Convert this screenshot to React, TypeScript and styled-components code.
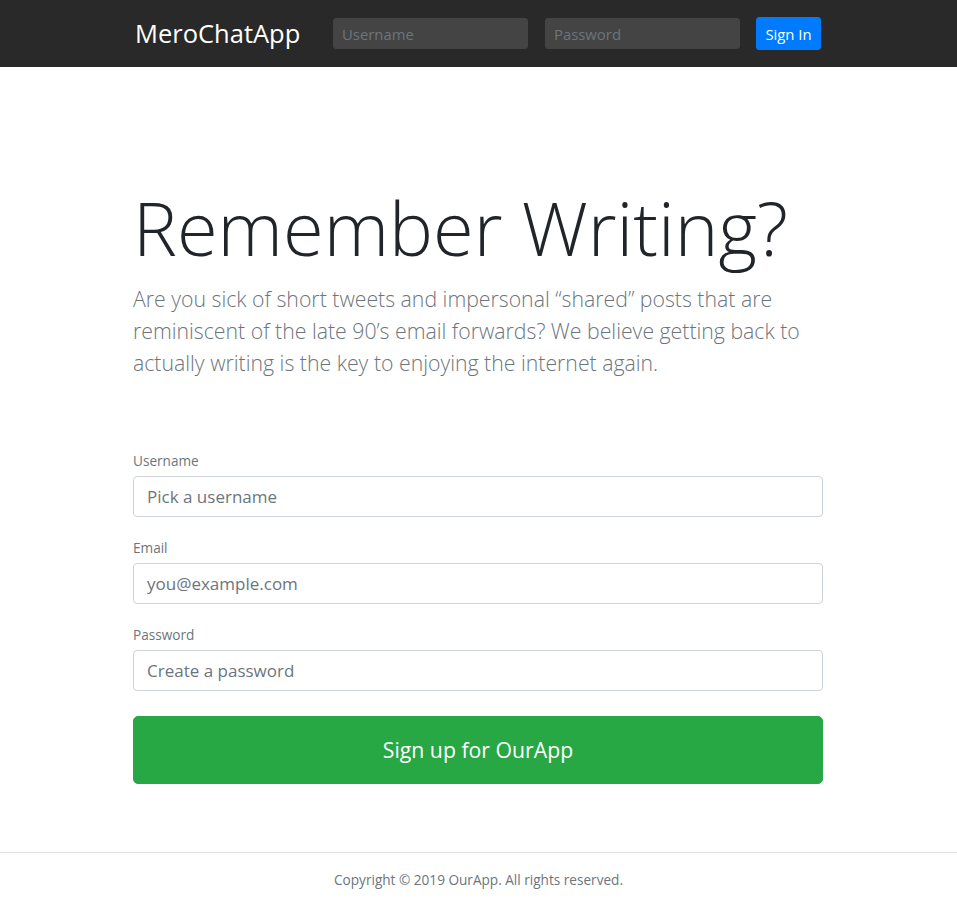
import React from "react";
import styled, { createGlobalStyle } from "styled-components";

const GlobalStyle = createGlobalStyle`
  html, body { margin: 0; padding: 0; background: #fff; }
  body {
    font-family: "Open Sans", "Liberation Sans", sans-serif;
    font-size: 17px;
    line-height: 1.5;
    color: #212529;
  }
  * { box-sizing: border-box; }
`;

const HeaderBar = styled.header`
  background: #292929;
  padding: 17px 0;
`;

const HeaderInner = styled.div`
  width: 686px;
  margin-left: calc(50% - 343.5px);
  display: flex;
  align-items: center;
  height: 33px;
`;

const Brand = styled.h4`
  margin: 0 auto 0 0;
  font-size: 25.5px;
  font-weight: 400;
  line-height: 1.2;
  color: #fff;
`;

const HeaderForm = styled.form`
  display: flex;
  align-items: center;
  gap: 17px;
`;

const HeaderInput = styled.input`
  width: 195px;
  height: 31px;
  padding: 4px 8px;
  font-family: inherit;
  font-size: 14.875px;
  color: #fff;
  background: #444;
  border: 1px solid #444;
  border-radius: 3px;
  outline: none;
  &::placeholder { color: #6c757d; }
`;

const SmallButton = styled.button`
  width: 65px;
  height: 33px;
  padding: 0;
  margin-left: -1px;
  font-family: inherit;
  font-size: 14.875px;
  color: #fff;
  background: #007bff;
  border: 1px solid #007bff;
  border-radius: 3px;
`;

const Main = styled.main`
  width: 690px;
  margin-left: calc(50% - 345.5px);
  padding-top: 115px;
`;

const Display = styled.h1`
  margin: 0 0 9.5px;
  font-size: 74px;
  font-weight: 300;
  line-height: 91.8px;
  color: #212529;
`;

const Lead = styled.p`
  margin: 0 0 68px;
  font-size: 21.25px;
  font-weight: 300;
  line-height: 1.5;
  color: #6c757d;
`;

const FormGroup = styled.div<{ $last?: boolean }>`
  margin-bottom: ${(p) => (p.$last ? "0" : "17px")};
`;

const Label = styled.label`
  display: block;
  height: 25px;
  margin-bottom: 4px;
  padding-top: 1px;
  font-size: 13.6px;
  line-height: 25px;
  color: #6c757d;
`;

const Field = styled.input`
  display: block;
  width: 100%;
  height: 41px;
  padding: 6px 13px;
  font-family: inherit;
  font-size: 17px;
  color: #495057;
  background: #fff;
  border: 1px solid #ced4da;
  border-radius: 4px;
  outline: none;
  &::placeholder { color: #6c757d; }
`;

const BigButton = styled.button`
  display: block;
  width: 100%;
  height: 68px;
  margin-top: 25px;
  font-family: inherit;
  font-size: 21.25px;
  color: #fff;
  background: #28a745;
  border: 1px solid #28a745;
  border-radius: 5px;
`;

const Footer = styled.footer`
  margin-top: 68px;
  border-top: 1px solid #dee2e6;
  padding: 17px 0;
  text-align: center;
  font-size: 13.6px;
  line-height: 20.4px;
  color: #6c757d;
  p { margin: 0; }
`;

export default function App() {
  return (
    <>
      <GlobalStyle />
      <HeaderBar>
        <HeaderInner>
          <Brand>MeroChatApp</Brand>
          <HeaderForm onSubmit={(e) => e.preventDefault()}>
            <HeaderInput type="text" placeholder="Username" />
            <HeaderInput type="password" placeholder="Password" />
            <SmallButton type="submit">Sign In</SmallButton>
          </HeaderForm>
        </HeaderInner>
      </HeaderBar>
      <Main>
        <Display>Remember Writing?</Display>
        <Lead>
          Are you sick of short tweets and impersonal “shared” posts that are
          reminiscent of the late 90’s email forwards? We believe getting back to
          actually writing is the key to enjoying the internet again.
        </Lead>
        <form onSubmit={(e) => e.preventDefault()}>
          <FormGroup>
            <Label htmlFor="username-register">Username</Label>
            <Field id="username-register" type="text" placeholder="Pick a username" />
          </FormGroup>
          <FormGroup>
            <Label htmlFor="email-register">Email</Label>
            <Field id="email-register" type="text" placeholder="you@example.com" />
          </FormGroup>
          <FormGroup $last>
            <Label htmlFor="password-register">Password</Label>
            <Field id="password-register" type="password" placeholder="Create a password" />
          </FormGroup>
          <BigButton type="submit">Sign up for OurApp</BigButton>
        </form>
      </Main>
      <Footer>
        <p>Copyright © 2019 OurApp. All rights reserved.</p>
      </Footer>
    </>
  );
}
